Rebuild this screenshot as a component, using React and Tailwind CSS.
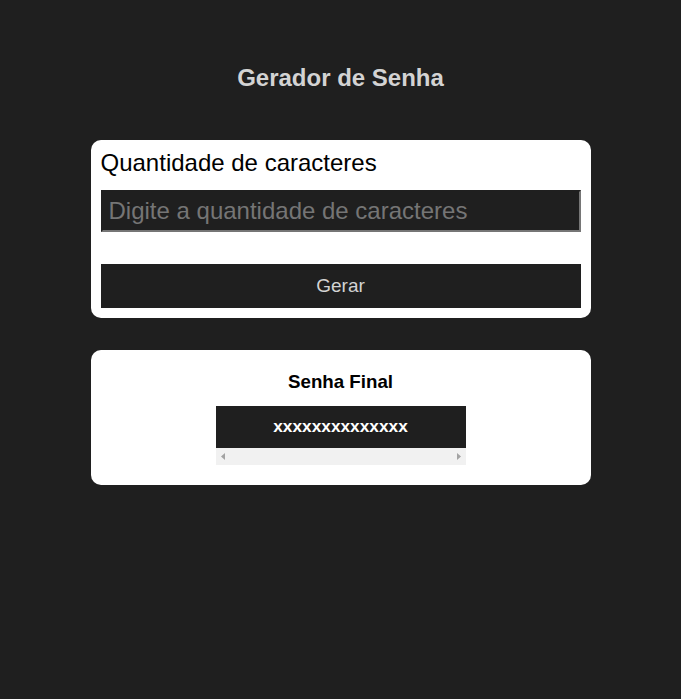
export default function App() {
  return (
    <div className="min-h-[699px] w-full bg-[#1f1f1f] font-['Liberation_Sans',Arial,sans-serif] flex flex-col items-center">
      <h2 className="mt-[64px] text-[24px] leading-[28px] font-bold text-[#d3d3d3]">Gerador de Senha</h2>
      <div className="mt-[48px] w-[500px] bg-white rounded-[10px] p-[10px] flex flex-col">
        <label className="text-[24px] leading-[27px] text-black mt-[-1px]">Quantidade de caracteres</label>
        <input
          type="text"
          placeholder="Digite a quantidade de caracteres"
          className="mt-[14px] h-[42px] w-full bg-[#1f1f1f] border-2 border-t-[#1f1f1f] border-l-[#1f1f1f] border-r-[#767676] border-b-[#767676] px-[6px] text-[24px] text-white placeholder:text-[#757575] outline-none"
        />
        <button className="mt-[32px] h-[44px] w-full bg-[#1f1f1f] text-[#d3d3d3] text-[19px]">Gerar</button>
      </div>
      <div className="mt-[32px] w-[500px] h-[135px] bg-white rounded-[10px] flex flex-col items-center">
        <h3 className="mt-[21px] text-[18.72px] leading-[22px] font-bold text-black">Senha Final</h3>
        <div className="mt-[13px] w-[250px] flex flex-col">
          <div className="h-[42px] bg-[#1f1f1f] flex items-center justify-center text-white font-bold text-[17.3px]">xxxxxxxxxxxxxx</div>
          <div className="h-[17px] bg-[#f1f1f1] flex items-center justify-between px-[5px]">
            <svg width="4" height="7" viewBox="0 0 4 7"><path d="M4 0 L0 3.5 L4 7 Z" fill="#a3a3a3" /></svg>
            <svg width="4" height="7" viewBox="0 0 4 7"><path d="M0 0 L4 3.5 L0 7 Z" fill="#a3a3a3" /></svg>
          </div>
        </div>
      </div>
    </div>
  );
}
